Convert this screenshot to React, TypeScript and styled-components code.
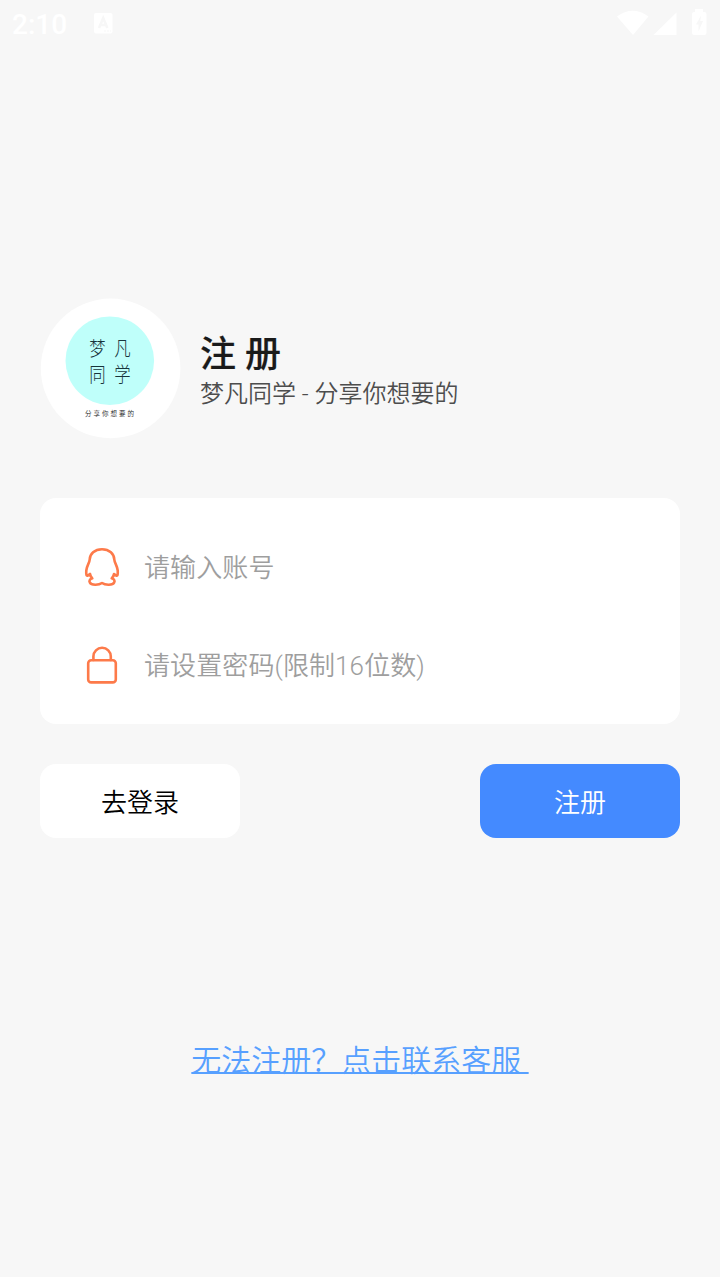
import React from "react";
import styled, { createGlobalStyle } from "styled-components";

const GlobalStyle = createGlobalStyle`
  * { box-sizing: border-box; }
  body { margin: 0; background: #f7f7f7; }
  body, input, button {
    font-family: Roboto, "Noto Sans CJK SC", sans-serif;
    font-weight: 350;
  }
`;

const Screen = styled.main`
  width: 720px;
  height: 1277px;
  display: flex;
  flex-direction: column;
  background: #f7f7f7;
  overflow: hidden;
`;

const StatusBar = styled.header`
  height: 48px;
  padding: 0 12px;
  display: flex;
  align-items: center;
  color: #fff;
`;

const Clock = styled.span`
  width: 82px;
  padding-top: 2px;
  font-size: 28px;
  line-height: 48px;
  font-weight: 500;
`;

const NoticeIcon = styled.svg`
  display: block;
  margin-top: -2px;
`;

const StatusIcons = styled.svg`
  display: block;
  margin-left: auto;
  margin-right: -12px;
`;

const Brand = styled.section`
  margin: 250px 40px 0;
  height: 141px;
  display: flex;
`;

const Logo = styled.svg`
  flex: none;
  display: block;
`;

const Titles = styled.div`
  padding: 36px 0 0 19px;
`;

const Title = styled.h1`
  margin: 0;
  font-size: 36px;
  line-height: 42px;
  font-weight: 500;
  color: #1a1a1a;
  -webkit-text-stroke: 0.2px #1a1a1a;
`;

const Subtitle = styled.p`
  margin: 0;
  font-size: 24px;
  line-height: 36px;
  color: #4d4d4d;
`;

const Card = styled.section`
  margin: 59px 40px 0;
  height: 226px;
  padding: 20px 40px 0;
  border-radius: 16px;
  background: #fff;
`;

const Field = styled.label`
  height: 98px;
  display: flex;
  align-items: center;
`;

const FieldIcon = styled.svg`
  flex: none;
  width: 44px;
  height: 44px;
  margin-right: 20px;
  fill: none;
  stroke: #fd7a4a;
  stroke-width: 2.6;
  stroke-linejoin: round;
  stroke-linecap: round;
`;

const Input = styled.input`
  flex: 1;
  min-width: 0;
  height: 60px;
  padding: 2px 0 0;
  border: 0;
  outline: 0;
  background: transparent;
  font-size: 26px;
  letter-spacing: 0.1px;
  color: #1a1a1a;
  &::placeholder { color: #9e9e9e; opacity: 1; }
`;

const Actions = styled.div`
  margin: 40px 40px 0;
  display: flex;
  justify-content: space-between;
`;

const Button = styled.button<{ $primary?: boolean }>`
  width: 200px;
  height: 74px;
  padding: 4px 0 0;
  border: 0;
  border-radius: 16px;
  font-size: 26px;
  line-height: 70px;
  background: ${(p) => (p.$primary ? "#448aff" : "#fff")};
  color: ${(p) => (p.$primary ? "#fff" : "#000")};
`;

const Support = styled.a`
  margin: 201px auto 0;
  font-size: 30px;
  line-height: 44px;
  white-space: pre;
  color: #57a0ff;
  text-decoration: underline;
  text-decoration-thickness: 2px;
  text-underline-offset: 1px;
  text-decoration-skip-ink: none;
`;

export default function App() {
  return (
    <Screen>
      <GlobalStyle />
      <StatusBar>
        <Clock>2:10</Clock>
        <NoticeIcon width="19" height="21" viewBox="0 0 19 21">
          <rect width="18.5" height="20.5" rx="2" fill="#fff" />
          <path d="M5 15 9.2 5l4.2 10M6.5 12h5.5" fill="none" stroke="#f7f7f7" strokeWidth="2.600" />
          <path d="M10 18h7" stroke="#f7f7f7" strokeDasharray="2 1" />
        </NoticeIcon>
        <StatusIcons width="110" height="48" viewBox="610 0 110 48" fill="#fff">
          <path d="M617 16.5q15.800-11.500 31.500 0L633 35z" />
          <path d="M676.500 12.500V35H653.500z" />
          <path
            fillRule="evenodd"
            d="M695 9h8v3h1.500a2 2 0 0 1 2 2v19a2 2 0 0 1-2 2H694a2 2 0 0 1-2-2V14a2 2 0 0 1 2-2h1zM701 15.500l-5 9h2.500v7l4.500-10.500h-2.800z"
          />
        </StatusIcons>
      </StatusBar>

      <Brand>
        <Logo width="141" height="141" viewBox="0 0 141 141">
          <circle cx="70.600" cy="70.400" r="69.800" fill="#fff" />
          <circle cx="69.800" cy="62.700" r="44.300" fill="#bffffa" />
          <g fill="#17343a" fontFamily='"Noto Sans CJK SC", sans-serif' fontWeight="300" fontSize="20" textAnchor="middle">
            <text transform="translate(57.500 57.700) scale(.82 1)">梦</text>
            <text transform="translate(82.500 57.700) scale(.82 1)">凡</text>
            <text transform="translate(57.500 84.200) scale(.82 1)">同</text>
            <text transform="translate(82.500 84.200) scale(.82 1)">学</text>
          </g>
          <text x="45" y="117.700" fill="#222" fontFamily='"Noto Sans CJK SC", sans-serif' fontSize="6.500" letterSpacing="2">
            分享你想要的
          </text>
        </Logo>
        <Titles>
          <Title>注 册</Title>
          <Subtitle>梦凡同学 - 分享你想要的</Subtitle>
        </Titles>
      </Brand>

      <Card>
        <Field>
          <FieldIcon viewBox="80 545 44 44">
            <path d="M102 549.300C94.500 549.300 89.900 554 89.700 559.500C89.500 563 86.800 565.500 86.300 570.500C86 575.500 86.500 577.300 90 574C90.200 575.800 91 577 92.300 578.300C89.500 579.200 88.900 581 89.900 582.700C91.200 585.200 98.500 585.400 102 583C105.500 585.400 112.800 585.200 114.100 582.700C115.100 581 114.500 579.200 111.700 578.300C113 577 113.800 575.800 114 574C117.500 577.300 118 575.500 117.700 570.500C117.200 565.500 114.500 563 114.300 559.500C114.100 554 109.500 549.300 102 549.300Z" />
          </FieldIcon>
          <Input placeholder="请输入账号" />
        </Field>
        <Field>
          <FieldIcon viewBox="80 643 44 44">
            <rect x="88.200" y="660.200" width="27.600" height="22.200" rx="3" />
            <path d="M93.400 660v-3.500a8.700 8.700 0 0 1 17.400 0v3.500" />
          </FieldIcon>
          <Input placeholder="请设置密码(限制16位数)" />
        </Field>
      </Card>

      <Actions>
        <Button type="button">去登录</Button>
        <Button type="button" $primary>注册</Button>
      </Actions>

      <Support>{"无法注册？点击联系客服 "}</Support>
    </Screen>
  );
}
